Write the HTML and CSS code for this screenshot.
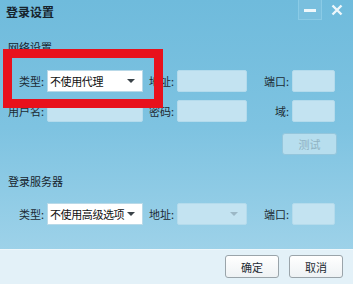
FILE: index.html
```html
<!DOCTYPE html>
<html lang="zh-CN">
<head>
    <meta charset="UTF-8">
    <title>登录设置</title>
    <link rel="stylesheet" href="styles.css">
</head>
<body>
    <div class="dialog">
        <div class="title-bar">
            <span class="title">登录设置</span>
            <div class="win-buttons">
                <span class="win-btn min-btn"><svg width="12" height="4" viewBox="0 0 12 4"><rect x="0" y="0" width="12" height="3" fill="#eef7fb"/></svg></span>
                <span class="win-btn close-btn"><svg width="12" height="12" viewBox="0 0 12 12"><path d="M1.5 1.5 L10.5 10.5 M10.5 1.5 L1.5 10.5" stroke="#eef7fb" stroke-width="2.4"/></svg></span>
            </div>
        </div>

        <div class="content">
            <div class="section-title net-title">网络设置</div>
            <div class="form-grid first-grid">
                <label class="lbl lbl-right">类型:</label>
                <div class="select"><span>不使用代理</span><i class="arrow"></i></div>
                <label class="lbl lbl-left">地址:</label>
                <div class="input"></div>
                <label class="lbl lbl-right">端口:</label>
                <div class="input"></div>

                <label class="lbl lbl-right">用户名:</label>
                <div class="input"></div>
                <label class="lbl lbl-left">密码:</label>
                <div class="input"></div>
                <label class="lbl lbl-right">域:</label>
                <div class="input"></div>
            </div>
            <div class="test-row">
                <button class="test-btn" disabled>测试</button>
            </div>

            <div class="section-title server-title">登录服务器</div>
            <div class="form-grid">
                <label class="lbl lbl-right">类型:</label>
                <div class="select"><span>不使用高级选项</span><i class="arrow"></i></div>
                <label class="lbl lbl-left">地址:</label>
                <div class="input combo"><i class="arrow light"></i></div>
                <label class="lbl lbl-right">端口:</label>
                <div class="input"></div>
            </div>
        </div>

        <div class="footer">
            <button class="btn">确定</button>
            <button class="btn">取消</button>
        </div>

        <div class="highlight"></div>
    </div>
</body>
</html>
```

FILE: styles.css
```css
body {
    margin: 0;
    font-family: "Noto Sans CJK SC", "Liberation Sans", sans-serif;
    font-size: 11px;
    color: #1c2a33;
}

.dialog {
    position: relative;
    width: 353px;
    height: 284px;
    display: flex;
    flex-direction: column;
    background: linear-gradient(to bottom, #6fbbdc 0%, #7ec3e1 45%, #a6d6eb 100%);
    overflow: hidden;
}

.title-bar {
    height: 26px;
    display: flex;
    justify-content: space-between;
    align-items: flex-start;
}

.title {
    font-size: 12px;
    font-weight: bold;
    color: #16232c;
    padding: 4px 0 0 6px;
    line-height: 16px;
}

.win-buttons {
    display: flex;
    margin-right: 4px;
}

.win-btn {
    width: 24px;
    height: 20px;
    display: flex;
    align-items: center;
    justify-content: center;
}

.min-btn {
    background: #79bfde;
    border: 1px solid #8acbe6;
    border-top: none;
    box-sizing: border-box;
    margin-right: 3px;
}

.min-btn svg {
    margin-top: 3px;
}

.content {
    flex: 1;
}

.section-title {
    padding-left: 8px;
    line-height: 16px;
    color: #16232c;
}

.net-title {
    margin-top: 13px;
}

.server-title {
    margin-top: 18px;
}

.form-grid {
    display: grid;
    grid-template-columns: 47px 96px 34px 70px 45px 43px;
    grid-auto-rows: 22px;
    row-gap: 8px;
    align-items: center;
    margin-top: 14px;
}

.first-grid {
    margin-top: 15px;
}

.lbl {
    color: #1c2a33;
    white-space: nowrap;
}

.lbl-right {
    text-align: right;
    padding-right: 3px;
}

.lbl-left {
    padding-left: 6px;
}

.select {
    height: 22px;
    box-sizing: border-box;
    background: #ffffff;
    border: 1px solid #b9d9e8;
    display: flex;
    align-items: center;
    justify-content: space-between;
    padding: 0 7px 0 2px;
    color: #111;
    white-space: nowrap;
    letter-spacing: -0.4px;
}

.arrow {
    width: 0;
    height: 0;
    border-left: 4px solid transparent;
    border-right: 4px solid transparent;
    border-top: 4px solid #3a4248;
}

.arrow.light {
    border-top-color: #9cb8c6;
}

.input {
    height: 22px;
    box-sizing: border-box;
    background: #c3e3f1;
    border: 1px solid #b4dbec;
    border-radius: 2px;
}

.combo {
    display: flex;
    align-items: center;
    justify-content: flex-end;
    padding-right: 8px;
}

.test-row {
    display: flex;
    justify-content: flex-end;
    padding-right: 16px;
    margin-top: 11px;
}

.test-btn {
    width: 55px;
    height: 22px;
    font-family: inherit;
    font-size: 11px;
    color: #8fb2c2;
    background: #b7deee;
    border: 1px solid #94c6dc;
    border-radius: 3px;
    padding: 0;
}

.footer {
    height: 35px;
    background: #e3f1f8;
    border-top: 1px solid #eef7fb;
    display: flex;
    justify-content: flex-end;
    align-items: flex-start;
    gap: 10px;
    padding: 5px 10px 0 0;
    box-sizing: border-box;
}

.btn {
    width: 54px;
    height: 23px;
    font-family: inherit;
    font-size: 11px;
    color: #1c2a33;
    background: linear-gradient(to bottom, #ffffff, #eef2f4);
    border: 1px solid #9aa4aa;
    border-radius: 3px;
    padding: 0;
}

.highlight {
    position: absolute;
    left: 3px;
    top: 49px;
    width: 160px;
    height: 59px;
    box-sizing: border-box;
    border: 9px solid #e8111c;
}
```
